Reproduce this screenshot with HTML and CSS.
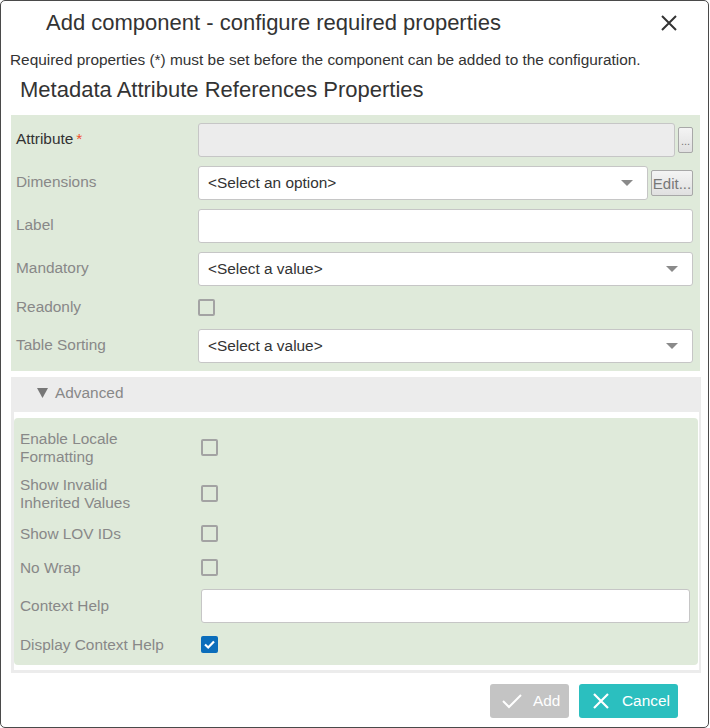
FILE: index.html
```html
<!DOCTYPE html>
<html>
<head>
<meta charset="utf-8">
<link rel="stylesheet" href="styles.css">
</head>
<body>
<div class="dialog">
  <div class="titlebar">
    <h1 class="title">Add component - configure required properties</h1>
    <svg class="close" width="18" height="18" viewBox="0 0 18 18"><path d="M2 2 L16 16 M16 2 L2 16" stroke="#333" stroke-width="2" fill="none"/></svg>
  </div>
  <p class="note">Required properties (*) must be set before the component can be added to the configuration.</p>
  <h2 class="section-title">Metadata Attribute References Properties</h2>

  <div class="panel">
    <div class="row">
      <div class="label req">Attribute<span class="star">*</span></div>
      <div class="ctrl">
        <div class="input disabled"></div>
        <button class="btn-small dots">...</button>
      </div>
    </div>
    <div class="row">
      <div class="label">Dimensions</div>
      <div class="ctrl">
        <div class="input select"><span>&lt;Select an option&gt;</span><i class="arrow"></i></div>
        <button class="btn-small edit">Edit...</button>
      </div>
    </div>
    <div class="row">
      <div class="label">Label</div>
      <div class="ctrl"><div class="input"></div></div>
    </div>
    <div class="row">
      <div class="label">Mandatory</div>
      <div class="ctrl"><div class="input select"><span>&lt;Select a value&gt;</span><i class="arrow"></i></div></div>
    </div>
    <div class="row short">
      <div class="label">Readonly</div>
      <div class="ctrl"><span class="check"></span></div>
    </div>
    <div class="row">
      <div class="label">Table Sorting</div>
      <div class="ctrl"><div class="input select"><span>&lt;Select a value&gt;</span><i class="arrow"></i></div></div>
    </div>
  </div>

  <div class="advanced">
    <div class="adv-head"><svg class="tri" width="11" height="10" viewBox="0 0 11 10"><path d="M0 0 H11 L5.5 10 Z" fill="#777"/></svg><span>Advanced</span></div>
    <div class="adv-body">
      <div class="adv-inner">
        <div class="row tall">
          <div class="label">Enable Locale<br>Formatting</div>
          <div class="ctrl"><span class="check"></span></div>
        </div>
        <div class="row tall">
          <div class="label">Show Invalid<br>Inherited Values</div>
          <div class="ctrl"><span class="check"></span></div>
        </div>
        <div class="row short">
          <div class="label">Show LOV IDs</div>
          <div class="ctrl"><span class="check"></span></div>
        </div>
        <div class="row short">
          <div class="label">No Wrap</div>
          <div class="ctrl"><span class="check"></span></div>
        </div>
        <div class="row">
          <div class="label">Context Help</div>
          <div class="ctrl"><div class="input"></div></div>
        </div>
        <div class="row short">
          <div class="label">Display Context Help</div>
          <div class="ctrl"><span class="check checked"><svg width="17" height="17" viewBox="0 0 17 17"><path d="M4 8.5 L7.2 11.5 L13 5.5" stroke="#fff" stroke-width="2.2" fill="none"/></svg></span></div>
        </div>
      </div>
    </div>
  </div>

  <div class="footer">
    <button class="fbtn add"><svg width="20" height="18" viewBox="0 0 20 18"><path d="M1 9 L7 15 L19 3" stroke="#fff" stroke-width="2" fill="none"/></svg><span>Add</span></button>
    <button class="fbtn cancel"><svg width="16" height="16" viewBox="0 0 16 16"><path d="M1 1 L15 15 M15 1 L1 15" stroke="#fff" stroke-width="2.2" fill="none"/></svg><span>Cancel</span></button>
  </div>
</div>
</body>
</html>
```

FILE: styles.css
```css
* { box-sizing: border-box; }
html, body { margin: 0; padding: 0; background: #fff; }
body { font-family: "Liberation Sans", Arial, sans-serif; color: #333; }

.dialog {
  width: 709px;
  height: 728px;
  border: 1px solid #4a4a4a;
  border-radius: 5px;
  background: #fff;
  display: flex;
  flex-direction: column;
}

.titlebar {
  display: flex;
  align-items: center;
  justify-content: space-between;
  height: 44px;
  padding: 0 30px 0 45px;
}
.title { margin: 0; font-size: 22px; font-weight: normal; color: #333; }
.close { display: block; }

.note { margin: 6px 0 0 9px; font-size: 15.4px; line-height: 18px; color: #333; }
.section-title { margin: 9px 0 0 19px; font-size: 22px; font-weight: normal; line-height: 24px; color: #333; }

.panel {
  margin: 13px 8px 0 10px;
  background: #dfeada;
  padding: 8px 7px 8px 5px;
  display: flex;
  flex-direction: column;
  gap: 9px;
}

.row { display: flex; align-items: center; min-height: 34px; }
.row.short { min-height: 25px; }
.row.tall { min-height: 37px; }
.label { width: 182px; flex: none; font-size: 15.4px; line-height: 18px; color: #888; }
.panel .label { padding-bottom: 2px; }
.label.req { color: #333; }
.star { color: #f0502e; margin-left: 3px; }
.ctrl { flex: 1; display: flex; align-items: center; gap: 3px; }

.input {
  flex: 1;
  height: 34px;
  border: 1px solid #c6c6c6;
  border-radius: 3px;
  background: #fff;
}
.input.disabled { background: #ececec; }
.input.select { display: flex; align-items: center; justify-content: space-between; padding: 0 14px 0 9px; font-size: 15.4px; color: #333; }
.arrow { width: 0; height: 0; border-left: 6px solid transparent; border-right: 6px solid transparent; border-top: 6px solid #8a8a8a; }

.btn-small {
  font-family: "Liberation Sans", Arial, sans-serif;
  height: 26px;
  border: 1px solid #a8a8a8;
  border-radius: 2px;
  background: linear-gradient(#f4f4f4, #e0e0e0);
  color: #777;
  padding: 0;
}
.btn-small.dots { width: 15px; font-size: 11px; line-height: 26px; }
.btn-small.edit { width: 42px; font-size: 15px; }

.check {
  width: 17px; height: 17px;
  border: 2px solid #a3a3a3;
  border-radius: 2px;
  background: transparent;
  display: block;
}
.check.checked { background: #0b6dbb; border: none; }
.check svg { display: block; }

.advanced {
  margin: 6px 7px 0 10px;
  background: #ececec;
  padding: 0 2px 3px 3px;
}
.adv-head { height: 35px; display: flex; align-items: center; padding: 0 0 4px 23px; font-size: 15.4px; color: #888; }
.tri { display: block; margin-right: 7px; }
.adv-body { background: #fff; padding: 6px 1px 5px 0; }
.adv-inner {
  background: #dfeada;
  border-radius: 4px;
  padding: 11px 8px 8px 6px;
  display: flex;
  flex-direction: column;
  gap: 9px;
}
.adv-inner .label { width: 181px; }

.footer {
  display: flex;
  justify-content: flex-end;
  gap: 10px;
  padding: 11px 30px 0 0;
}
.fbtn {
  height: 34px;
  border: none;
  border-radius: 3px;
  color: #fff;
  font-family: "Liberation Sans", Arial, sans-serif;
  font-size: 15.4px;
  display: flex;
  align-items: center;
  padding: 0;
}
.fbtn.add { width: 79px; background: #c4c4c4; padding-left: 12px; }
.fbtn.add span { margin-left: 11px; }
.fbtn.cancel { width: 99px; background: #2bbfbf; padding-left: 14px; }
.fbtn.cancel span { margin-left: 13px; }
.fbtn svg { display: block; }
```
